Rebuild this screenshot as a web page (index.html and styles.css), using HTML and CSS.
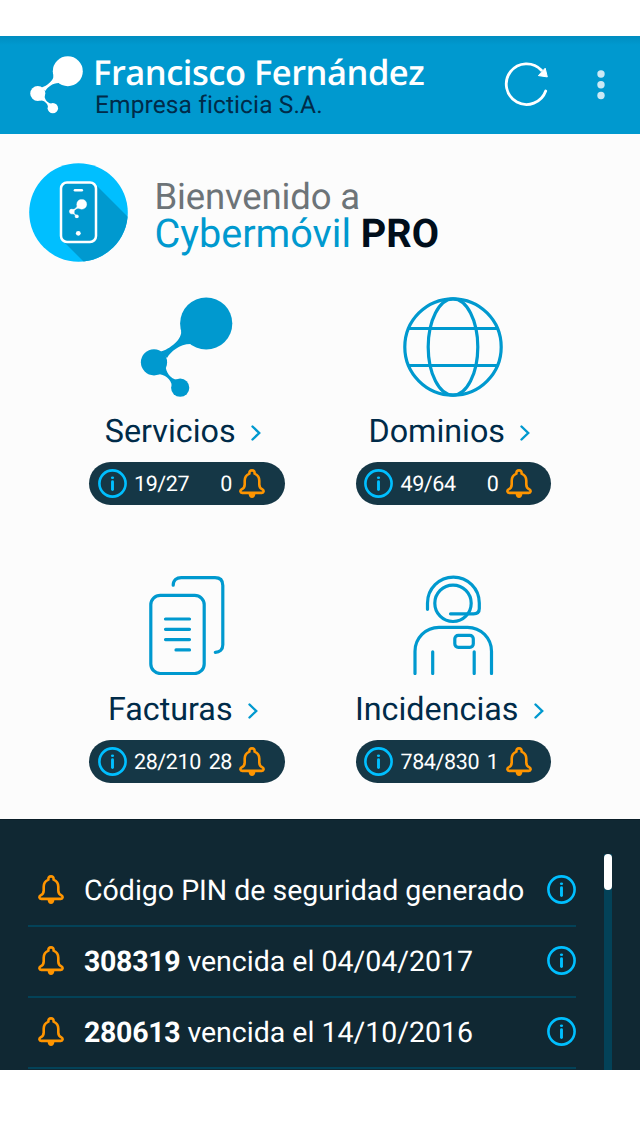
FILE: index.html
```html
<!DOCTYPE html>
<html lang="es">
<head>
<meta charset="utf-8">
<title>Cybermóvil PRO</title>
<link rel="stylesheet" href="styles.css">
</head>
<body>
<svg class="sprite" width="0" height="0" aria-hidden="true">
  <symbol id="nodes" viewBox="0 0 100 100">
    <circle cx="69.2" cy="26.5" r="26.1"/><circle cx="17" cy="65.3" r="13.1"/><circle cx="43.2" cy="90.7" r="9.1"/>
    <path d="M44 33C46 42 33 52 23 55L30 61C34 54 45 45 58 47.5ZM28.5 68C28.5 75 34 82.5 40 82.5L35 89C34 82 28 77 20 77Z"/>
  </symbol>
  <symbol id="bell" viewBox="0 0 26 29">
    <path d="M10.4 4.6C10.2 2.4 11.2 1.4 13 1.4S15.8 2.4 15.6 4.6C19 6 20.3 8.6 20.3 11.8V15.5C20.3 18 21.3 19.4 23.4 20.4C25.2 21.4 24.9 23.9 22.8 23.9H3.2C1.1 23.9 .8 21.4 2.6 20.4C4.7 19.4 5.7 18 5.7 15.5V11.8C5.7 8.6 7 6 10.4 4.6Z" fill="none" stroke="currentColor" stroke-width="2.6" stroke-linejoin="round"/>
    <path d="M9.6 25H16.4C16 27.5 15 29 13 29S10 27.5 9.6 25Z" fill="currentColor"/>
  </symbol>
  <symbol id="info" viewBox="0 0 29 29">
    <circle cx="14.5" cy="14.5" r="13.1" fill="none" stroke="currentColor" stroke-width="2.6"/>
    <path d="M14.5 12.8V20.6" fill="none" stroke="currentColor" stroke-width="2.9" stroke-linecap="round"/>
    <ellipse cx="14.5" cy="8.7" rx="1.6" ry="1.2" fill="currentColor"/>
  </symbol>
  <symbol id="chevron" viewBox="0 0 10 16">
    <path d="M1.5 1.5L8.2 8L1.5 14.5" fill="none" stroke="currentColor" stroke-width="2.4" stroke-linecap="round"/>
  </symbol>
</svg>

<header class="topbar">
  <svg class="logo"><use href="#nodes"/></svg>
  <div class="account">
    <h1 class="user">Francisco Fernández</h1>
    <p class="company">Empresa ficticia S.A.</p>
  </div>
  <svg class="refresh" viewBox="0 0 46 46">
    <path d="M43.7 30A20.3 20.3 0 1 1 39.4 9.3" fill="none" stroke="currentColor" stroke-width="2.8" stroke-linecap="round"/>
    <path d="M43.2 7.2L45.3 15.9L36.4 14.6Z" fill="currentColor" stroke="currentColor" stroke-linejoin="round"/>
  </svg>
  <svg class="more" viewBox="0 0 8 30"><circle cx="4" cy="4" r="3.7"/><circle cx="4" cy="14.8" r="3.7"/><circle cx="4" cy="25.5" r="3.7"/></svg>
</header>

<main class="home">
  <section class="welcome">
    <svg class="badge" viewBox="0 0 99 99">
      <defs><clipPath id="disc"><circle cx="49.5" cy="49.5" r="49.3"/></clipPath></defs>
      <circle cx="49.5" cy="49.5" r="49.3" fill="#00bfff"/>
      <path clip-path="url(#disc)" d="M66 21L110 65V110H66L33 77Z" fill="#0099cf"/>
      <rect x="32" y="19.5" width="35" height="59.5" rx="6" fill="#0099cf" stroke="#fff" stroke-width="2.5"/>
      <path d="M46 27.2H52.8" stroke="#fff" stroke-width="2.6" stroke-linecap="round"/>
      <circle cx="49.3" cy="70.3" r="2.4" fill="#fff"/>
      <use href="#nodes" x="39.6" y="36.2" width="19" height="19" fill="#fff" stroke="#fff" stroke-width="2"/>
    </svg>
    <div class="greeting">
      <p class="hello">Bienvenido a</p>
      <p class="product"><span class="product-name">Cybermóvil</span> <b class="edition">PRO</b></p>
    </div>
  </section>

  <section class="tiles">
    <article class="tile">
      <svg class="tile-icon solid"><use href="#nodes"/></svg>
      <h2 class="label"><span>Servicios</span><svg class="chevron"><use href="#chevron"/></svg></h2>
      <div class="pill"><svg class="info"><use href="#info"/></svg><span>19/27</span><span class="alerts">0</span><svg class="bell"><use href="#bell"/></svg></div>
    </article>
    <article class="tile">
      <svg class="tile-icon" viewBox="0 0 100 100">
        <circle cx="50" cy="50" r="48.2"/><ellipse cx="50" cy="50" rx="24.8" ry="48.2"/><path d="M6 31.5H94M6 68.5H94"/>
      </svg>
      <h2 class="label"><span>Dominios</span><svg class="chevron"><use href="#chevron"/></svg></h2>
      <div class="pill"><svg class="info"><use href="#info"/></svg><span>49/64</span><span class="alerts">0</span><svg class="bell"><use href="#bell"/></svg></div>
    </article>
    <article class="tile">
      <svg class="tile-icon" viewBox="0 0 100 100">
        <rect x="13.8" y="20.3" width="53.4" height="78.2" rx="9.5"/>
        <path d="M36.2 10.2C36.2 5.2 39.7 2.6 44.2 2.6H78Q85.8 2.6 85.8 10.4V69.8C85.8 74.8 82.6 77.3 78.3 77.3M28.5 44H52.5M28.5 54.3H52.5M28.5 64.6H52.5M39 74.9H52.5"/>
      </svg>
      <h2 class="label"><span>Facturas</span><svg class="chevron"><use href="#chevron"/></svg></h2>
      <div class="pill"><svg class="info"><use href="#info"/></svg><span>28/210</span><span class="alerts">28</span><svg class="bell"><use href="#bell"/></svg></div>
    </article>
    <article class="tile">
      <svg class="tile-icon" viewBox="0 0 100 100">
        <circle cx="50" cy="28.3" r="18.2"/>
        <path d="M24.5 34.3V28A25.9 25.9 0 0 1 76.3 28V33.5Q76.3 38.8 70.5 38.8H47.5M12 98.5V76.5A24 24 0 0 1 36 52.3H64.5A24 24 0 0 1 88.5 76.5V98.5M29.7 76.8V98.5M71.2 76.8V98.5"/>
        <rect x="51.8" y="60.3" width="18.5" height="12" rx="3.5"/>
      </svg>
      <h2 class="label"><span>Incidencias</span><svg class="chevron"><use href="#chevron"/></svg></h2>
      <div class="pill"><svg class="info"><use href="#info"/></svg><span>784/830</span><span class="alerts">1</span><svg class="bell"><use href="#bell"/></svg></div>
    </article>
  </section>
</main>

<section class="notices">
  <ul class="notice-list">
    <li class="notice"><svg class="bell"><use href="#bell"/></svg><span class="notice-text">Código PIN de seguridad generado</span><svg class="info"><use href="#info"/></svg></li>
    <li class="notice"><svg class="bell"><use href="#bell"/></svg><span class="notice-text"><b>308319</b> vencida el 04/04/2017</span><svg class="info"><use href="#info"/></svg></li>
    <li class="notice"><svg class="bell"><use href="#bell"/></svg><span class="notice-text"><b>280613</b> vencida el 14/10/2016</span><svg class="info"><use href="#info"/></svg></li>
  </ul>
  <div class="scrollbar"><div class="thumb"></div></div>
</section>
</body>
</html>
```
FILE: styles.css
```css
* { box-sizing: border-box; }
body { margin: 0; padding: 36px 0 68px; background: #fff; font-family: Roboto, sans-serif; white-space: nowrap; text-rendering: geometricPrecision; }
h1, h2, p, ul { margin: 0; padding: 0; font-weight: 400; }
svg { display: block; flex: none; }
.sprite { display: none; }

.topbar { display: flex; height: 98px; padding-left: 27.5px; background: linear-gradient(#008dc0, #0099cf 9px); color: #fff; }
.logo { width: 57.5px; height: 57.5px; margin-top: 19.5px; fill: #fff; overflow: visible; }
.account { width: 417px; padding: 18px 0 0 8px; }
.user { font: 600 34.5px/38px "Open Sans", sans-serif; letter-spacing: -0.5px; }
.company { padding-left: 2px; font-size: 24.5px; line-height: 26px; letter-spacing: 0.12px; color: #002b49; }
.refresh { width: 46px; height: 46px; margin-top: 25px; }
.more { width: 8px; height: 30px; margin: 33.5px 0 0 49px; fill: #cce9f5; }

.home { height: 685px; background: #fcfcfc; }
.welcome { display: flex; height: 163px; padding: 29px 0 0 28.5px; }
.badge { width: 99px; height: 99px; }
.greeting { padding: 15px 0 0 27px; }
.hello { font-size: 36.5px; line-height: 37px; letter-spacing: -0.15px; color: #6d7478; }
.product { font-size: 39.6px; line-height: 38px; color: #0099cf; }
.edition { color: #000e1b; }

.tiles { display: grid; grid-template-columns: 195.5px 195.5px; column-gap: 71px; row-gap: 70.5px; padding-left: 89px; }
.tile { height: 207.5px; }
.tile-icon { width: 100px; height: 100px; margin: 0 auto; fill: none; stroke: #0099cf; stroke-width: 3.2; stroke-linecap: round; }
.tile-icon.solid { fill: #0099cf; stroke: none; }
.label { display: flex; align-items: center; justify-content: center; gap: 15px; height: 38px; margin: 14.5px 0 12px; padding-right: 8px; font-size: 32.3px; color: #002b49; }
.chevron { width: 10px; height: 16px; margin-top: 4px; color: #0099cf; }
.pill { display: flex; align-items: center; height: 43px; padding: 0 19.5px 0 8.5px; border-radius: 22px; background: #153746; color: #fff; font-size: 21.5px; letter-spacing: -0.4px; }
.pill span { padding-top: 2px; }
.info { width: 29px; height: 29px; color: #00bfff; }
.bell { width: 26px; height: 29px; color: #ff9500; }
.pill .info { margin-right: 7.5px; }
.alerts { margin: 0 7px 0 auto; }

.notices { display: flex; height: 251px; padding: 34px 28px 0; overflow: hidden; background: #102833; border-top: 1px solid #0a1d27; }
.notice-list { width: 548px; padding-top: 2px; list-style: none; }
.notice { display: flex; align-items: center; height: 71px; padding: 0 0 2px 10px; border-bottom: 2px solid #034258; color: #fff; }
.notice-text { margin: 1px auto 0 20px; font-size: 28.5px; }
.notice-text b { letter-spacing: -0.3px; }
.scrollbar { width: 8px; height: 217px; margin-left: 28px; background: #034258; }
.thumb { height: 36px; border-radius: 4px; background: #fff; }
```
